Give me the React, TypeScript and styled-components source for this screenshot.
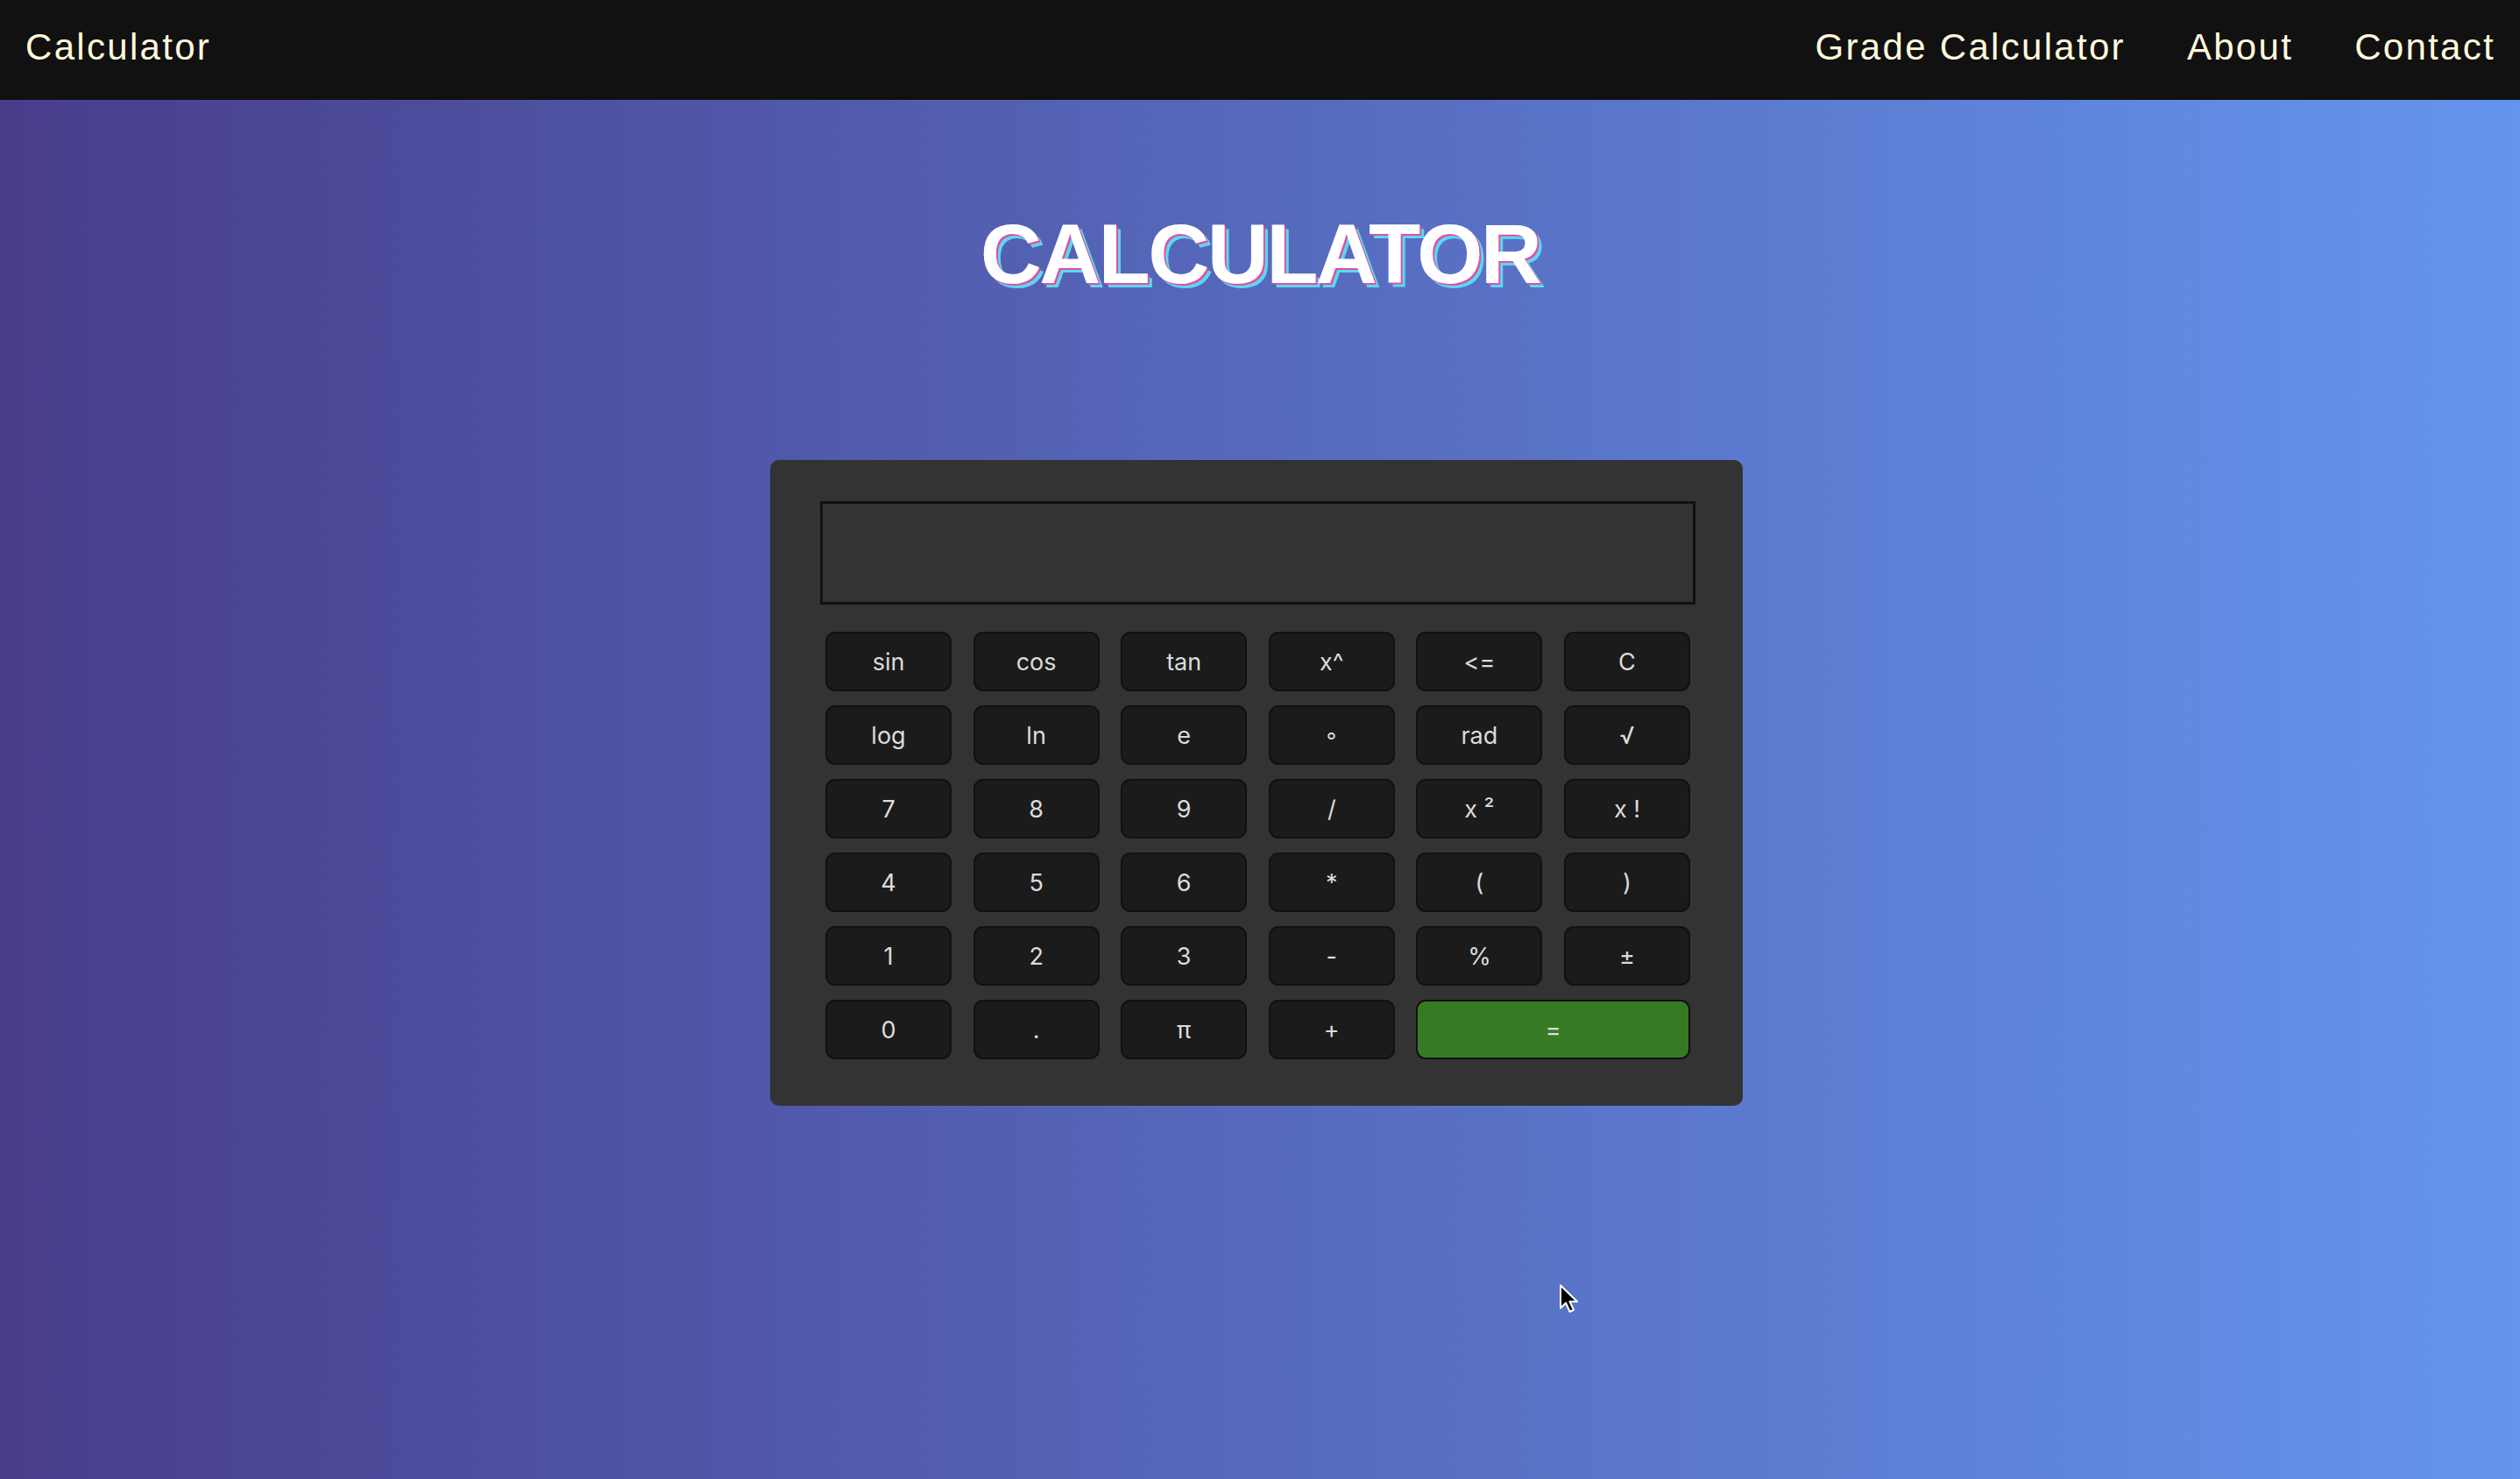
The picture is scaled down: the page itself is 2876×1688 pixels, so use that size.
import React from "react";
import styled, { createGlobalStyle } from "styled-components";

const GlobalStyle = createGlobalStyle`
  html, body {
    margin: 0;
    padding: 0;
  }
  body {
    min-height: 100vh;
    background: linear-gradient(to right, #483d8b, #6495ed);
    font-family: "Liberation Sans", Arial, sans-serif;
  }
`;

const Page = styled.div`
  position: relative;
  min-height: 100vh;
  display: flex;
  flex-direction: column;
  align-items: center;
`;

const NavBar = styled.nav`
  align-self: stretch;
  height: 114px;
  box-sizing: border-box;
  padding: 0 28px 7px 29px;
  background: #111;
  display: flex;
  align-items: center;
  justify-content: space-between;
`;

const NavLinks = styled.div`
  display: flex;
  gap: 70px;
`;

const NavItem = styled.a`
  font-family: "Liberation Sans", Arial, sans-serif;
  font-size: 42px;
  letter-spacing: 2.3px;
  color: #fff8dc;
  text-decoration: none;
  cursor: pointer;
`;

const Title = styled.h1`
  margin: 121px 0 0;
  font-family: "Liberation Sans", Arial, sans-serif;
  font-weight: 700;
  font-size: 97px;
  line-height: 110px;
  letter-spacing: -2.6px;
  color: #fff;
  text-shadow: 2px 2px 0 #e0509e, 5px 5px 0 #5ad8f2;
`;

const Calculator = styled.div`
  margin: 180px 8px 0 0;
  width: 1110px;
  box-sizing: border-box;
  padding: 47px 54px 53px 57px;
  background: #333;
  border-radius: 10px;
`;

const Display = styled.input`
  display: block;
  width: 100%;
  height: 118px;
  box-sizing: border-box;
  background: #333;
  border: 3px solid #111;
  color: #eee;
  font-family: "Inter", "Liberation Sans", sans-serif;
  font-size: 48px;
  text-align: right;
  padding: 0 20px;
  outline: none;
`;

const Keypad = styled.div`
  margin-top: 31px;
  display: grid;
  grid-template-columns: repeat(6, 144px);
  grid-auto-rows: 68px;
  column-gap: 24.6px;
  row-gap: 16px;
  justify-content: center;
`;

const Key = styled.button<{ $accent?: boolean; $wide?: boolean }>`
  grid-column: ${({ $wide }) => ($wide ? "span 2" : "auto")};
  background: ${({ $accent }) => ($accent ? "#367b23" : "#1b1b1b")};
  border: 2px solid #111;
  border-radius: 11px;
  color: #dcdcdc;
  font-family: "Inter", "Liberation Sans", sans-serif;
  font-size: 27px;
  padding: 0;
  cursor: pointer;
`;

const Pointer = styled.svg`
  position: absolute;
  left: 1779px;
  top: 1465px;
  width: 24px;
  height: 36px;
  pointer-events: none;
`;

const keys: string[] = [
  "sin", "cos", "tan", "x^", "<=", "C",
  "log", "ln", "e", "∘", "rad", "√",
  "7", "8", "9", "/", "x ²", "x !",
  "4", "5", "6", "*", "(", ")",
  "1", "2", "3", "-", "%", "±",
  "0", ".", "π", "+",
];

export default function App() {
  return (
    <Page>
      <GlobalStyle />
      <NavBar>
        <NavItem>Calculator</NavItem>
        <NavLinks>
          <NavItem>Grade Calculator</NavItem>
          <NavItem>About</NavItem>
          <NavItem>Contact</NavItem>
        </NavLinks>
      </NavBar>

      <Title>CALCULATOR</Title>

      <Calculator>
        <Display readOnly value="" />
        <Keypad>
          {keys.map((k) => (
            <Key key={k}>{k}</Key>
          ))}
          <Key $accent $wide>
            =
          </Key>
        </Keypad>
      </Calculator>

      <Pointer viewBox="0 0 24 36">
        <path
          d="M2 2 L2 28 L8 22 L12.5 32 L17 30 L12.5 20.5 L21 20.5 Z"
          fill="#000"
          stroke="#fff"
          strokeWidth="2"
          strokeLinejoin="round"
        />
      </Pointer>
    </Page>
  );
}
